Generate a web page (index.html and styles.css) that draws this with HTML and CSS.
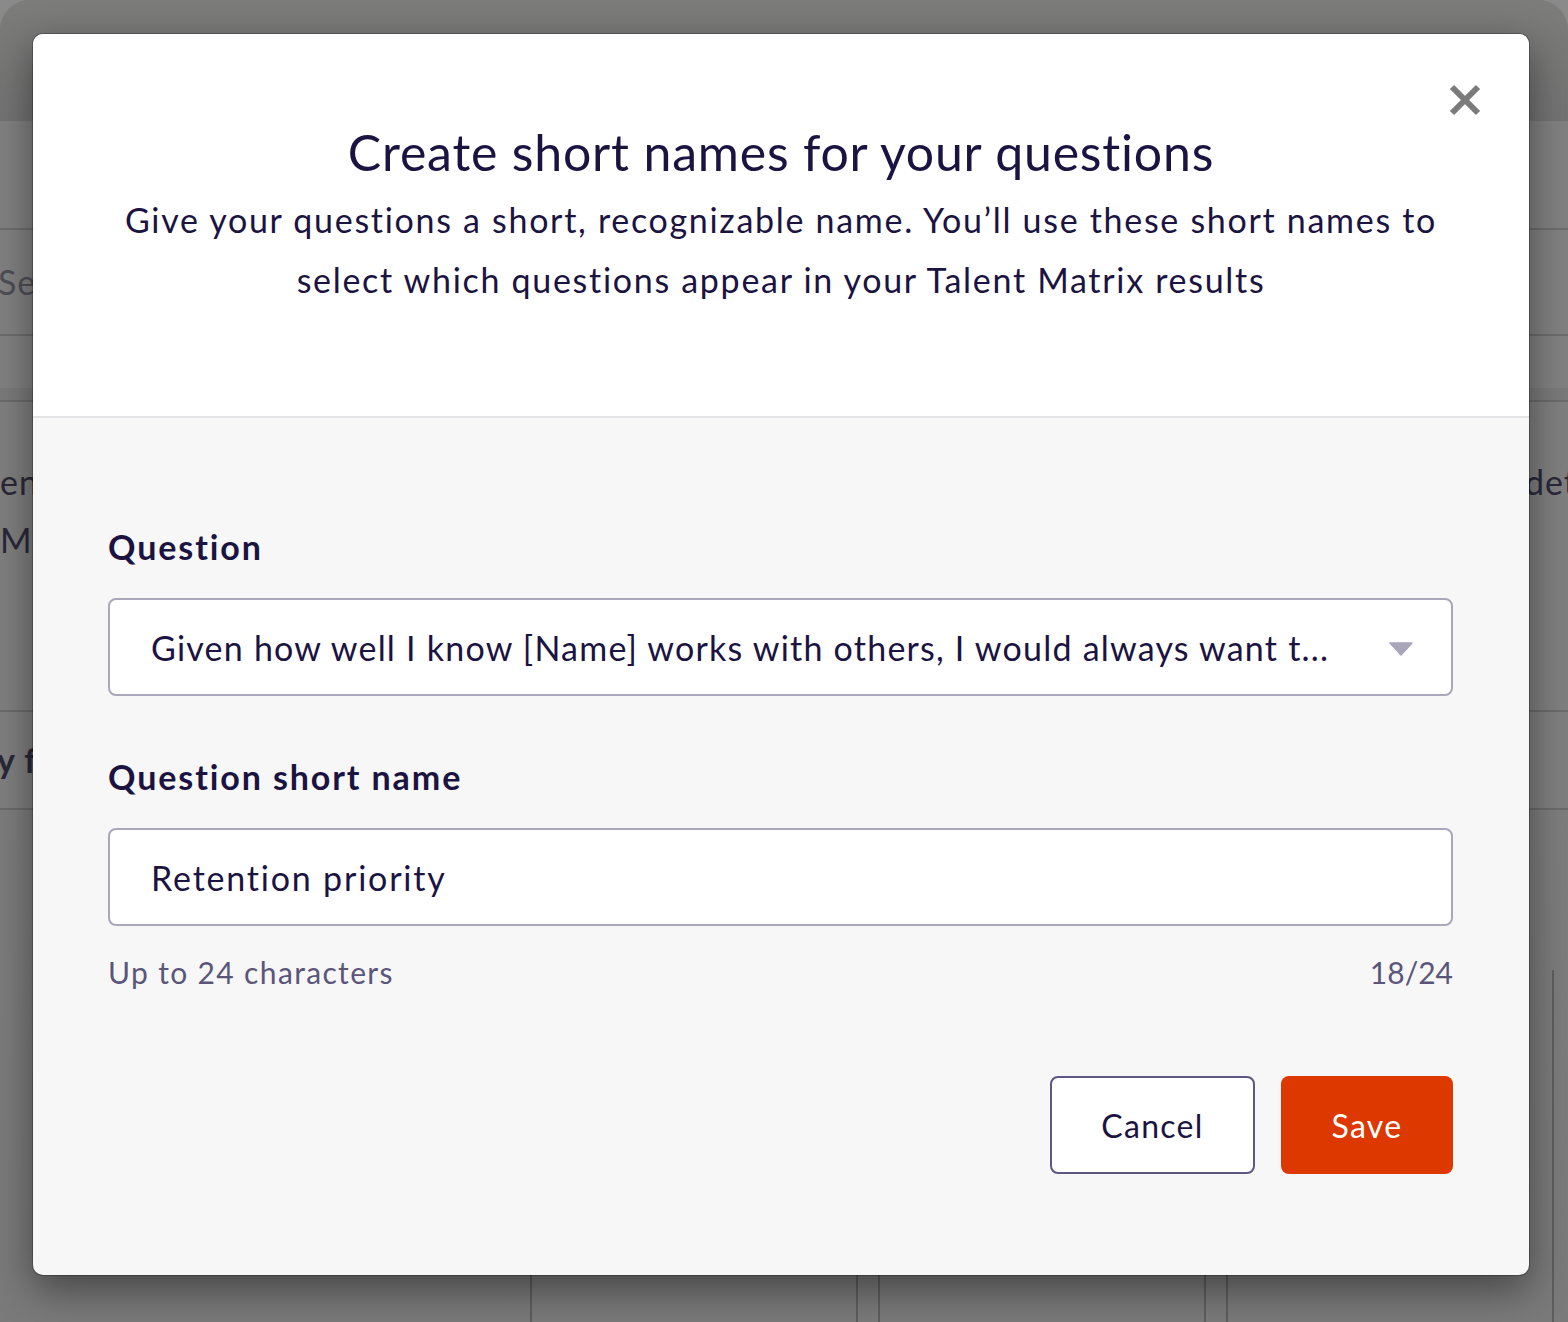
FILE: index.html
```html
<!DOCTYPE html>
<html lang="en">
<head>
<meta charset="utf-8">
<title>Create short names</title>
<link rel="stylesheet" href="styles.css">
</head>
<body>
<div class="page">
  <div class="page-top"></div>
  <div class="page-search"><span class="search-text">Search</span></div>
  <div class="page-band"></div>
  <div class="page-row page-row-tall">
    <div class="row-left"><div>entire</div><div>Matrix</div></div>
    <div class="row-right">details</div>
  </div>
  <div class="page-row page-row-short">
    <div class="row-left bold">y filter</div>
  </div>
  <div class="page-cards">
    <div class="card"></div>
    <div class="card"></div>
    <div class="card card-last"></div>
  </div>
</div>

<div class="modal" role="dialog" aria-labelledby="modal-title">
  <div class="modal-head">
    <button class="close" aria-label="Close">
      <svg width="34" height="34" viewBox="0 0 34 34"><path d="M4 4 L30 30 M30 4 L4 30" stroke="#7b7b7b" stroke-width="6" stroke-linecap="butt"/></svg>
    </button>
    <h1 id="modal-title" class="title">Create short names for your questions</h1>
    <p class="subtitle">Give your questions a short, recognizable name. You’ll use these short names to select which questions appear in your Talent Matrix results</p>
  </div>
  <div class="modal-body">
    <label class="label">Question</label>
    <div class="field select">
      <span class="field-text field-text-select">Given how well I know [Name] works with others, I would always want t...</span>
      <svg class="caret" width="24" height="14" viewBox="0 0 24 14"><path d="M1 1 H23 L12 13 Z" fill="#a9a5ba" stroke="#a9a5ba" stroke-width="1.5" stroke-linejoin="round"/></svg>
    </div>
    <label class="label label-second">Question short name</label>
    <div class="field">
      <span class="field-text field-text-input">Retention priority</span>
    </div>
    <div class="helper">
      <span>Up to 24 characters</span>
      <span class="counter">18/24</span>
    </div>
    <div class="actions">
      <button class="btn btn-cancel">Cancel</button>
      <button class="btn btn-save">Save</button>
    </div>
  </div>
</div>
</body>
</html>
```

FILE: styles.css
```css
html, body {
  margin: 0;
  padding: 0;
}
body {
  width: 1568px;
  height: 1322px;
  overflow: hidden;
  background: #8a8a8a;
  font-family: "Lato", "Liberation Sans", sans-serif;
  position: relative;
}

/* Dimmed background page */
.page {
  height: 1322px;
  background: #7f7f7f;
  border-radius: 30px 30px 0 0;
  overflow: hidden;
  display: flex;
  flex-direction: column;
  color: #2a2838;
}
.page-top {
  height: 121px;
  flex: none;
  background: linear-gradient(#7c7c7b, #737373);
}
.page-search {
  height: 267px;
  flex: none;
  box-sizing: border-box;
  padding-top: 107px;
  background: #818181;
}
.search-text {
  display: block;
  box-sizing: border-box;
  border-top: 2px solid #6d6d6d;
  border-bottom: 2px solid #6d6d6d;
  height: 108px;
  line-height: 104px;
  font-size: 34px;
  color: #4f4e55;
  margin-left: -2px;
  letter-spacing: 1px;
}
.page-band {
  height: 12px;
  flex: none;
  background: #7a7a7a;
  border-bottom: 2px solid #6b6b6b;
}
.page-row {
  display: flex;
  font-size: 34px;
  border-bottom: 2px solid #6b6b6b;
  flex: none;
  box-sizing: border-box;
}
.page-row-tall {
  height: 310px;
  padding-top: 51px;
}
.row-left {
  width: 1525px;
  flex: none;
  line-height: 58px;
  letter-spacing: 1px;
}
.row-right {
  flex: none;
  line-height: 58px;
  letter-spacing: 1px;
}
.page-row-short {
  height: 98px;
  align-items: center;
}
.bold { font-weight: 700; margin-left: -3px; }
.page-cards {
  flex: 1;
  display: flex;
  gap: 20px;
  padding: 0 14px 0 530px;
  background: linear-gradient(#7d7d7d, #7a7a7a);
}
.card {
  flex: 1;
  border-left: 2px solid #5e5e5e;
  border-right: 2px solid #5e5e5e;
  margin-top: 160px;
}

/* Modal */
.modal {
  position: absolute;
  left: 33px;
  top: 34px;
  width: 1496px;
  height: 1241px;
  border-radius: 10px;
  background: #f7f7f7;
  box-shadow: 0 14px 40px rgba(0, 0, 0, 0.45), 0 0 0 1px rgba(0,0,0,0.25);
  overflow: hidden;
  display: flex;
  flex-direction: column;
  color: #1b1340;
}
.modal-head {
  position: relative;
  height: 384px;
  flex: none;
  background: #ffffff;
  border-bottom: 2px solid #e4e4e6;
  box-sizing: border-box;
  padding: 88px 60px 0;
  text-align: center;
}
.close {
  position: absolute;
  top: 49px;
  right: 47px;
  width: 34px;
  height: 34px;
  padding: 0;
  border: 0;
  background: transparent;
  cursor: pointer;
}
.close svg { display: block; }
.title {
  margin: 0;
  font-size: 50px;
  font-weight: 400;
  line-height: 60px;
  letter-spacing: 0.8px;
}
.subtitle {
  margin: 8px auto 0;
  font-size: 34px;
  line-height: 60px;
  max-width: 1340px;
  letter-spacing: 1.7px;
}

.modal-body {
  flex: 1;
  padding: 109px 76px 0 75px;
  display: flex;
  flex-direction: column;
}
.label {
  display: block;
  font-size: 34px;
  font-weight: 700;
  line-height: 40px;
  margin-bottom: 31px;
  letter-spacing: 1.9px;
}
.label-second {
  margin-top: 61px;
}
.field {
  height: 98px;
  flex: none;
  box-sizing: border-box;
  border: 2px solid #aaa6bb;
  border-radius: 8px;
  background: #ffffff;
  display: flex;
  align-items: center;
  padding: 0 40px 0 41px;
}
.field-text {
  flex: 1;
  font-size: 34px;
  white-space: nowrap;
  overflow: hidden;
}
.field-text-select { letter-spacing: 1.22px; }
.field-text-input { letter-spacing: 1.8px; }
.select {
  padding-right: 38px;
}
.caret {
  flex: none;
  margin-left: 20px;
  margin-top: 4px;
}
.helper {
  display: flex;
  justify-content: space-between;
  margin-top: 28px;
  font-size: 30px;
  line-height: 36px;
  color: #5b5679;
  letter-spacing: 1.35px;
}
.helper .counter { letter-spacing: 0; }
.actions {
  display: flex;
  justify-content: flex-end;
  gap: 26px;
  margin-top: 86px;
}
.btn {
  height: 98px;
  border-radius: 8px;
  font-family: inherit;
  font-size: 32px;
  letter-spacing: 1.3px;
  cursor: pointer;
  box-sizing: border-box;
}
.btn-cancel {
  width: 205px;
  background: #ffffff;
  border: 2px solid #5d5880;
  color: #1b1340;
}
.btn-save {
  width: 172px;
  background: #dc3800;
  border: 0;
  color: #ffffff;
}
```
